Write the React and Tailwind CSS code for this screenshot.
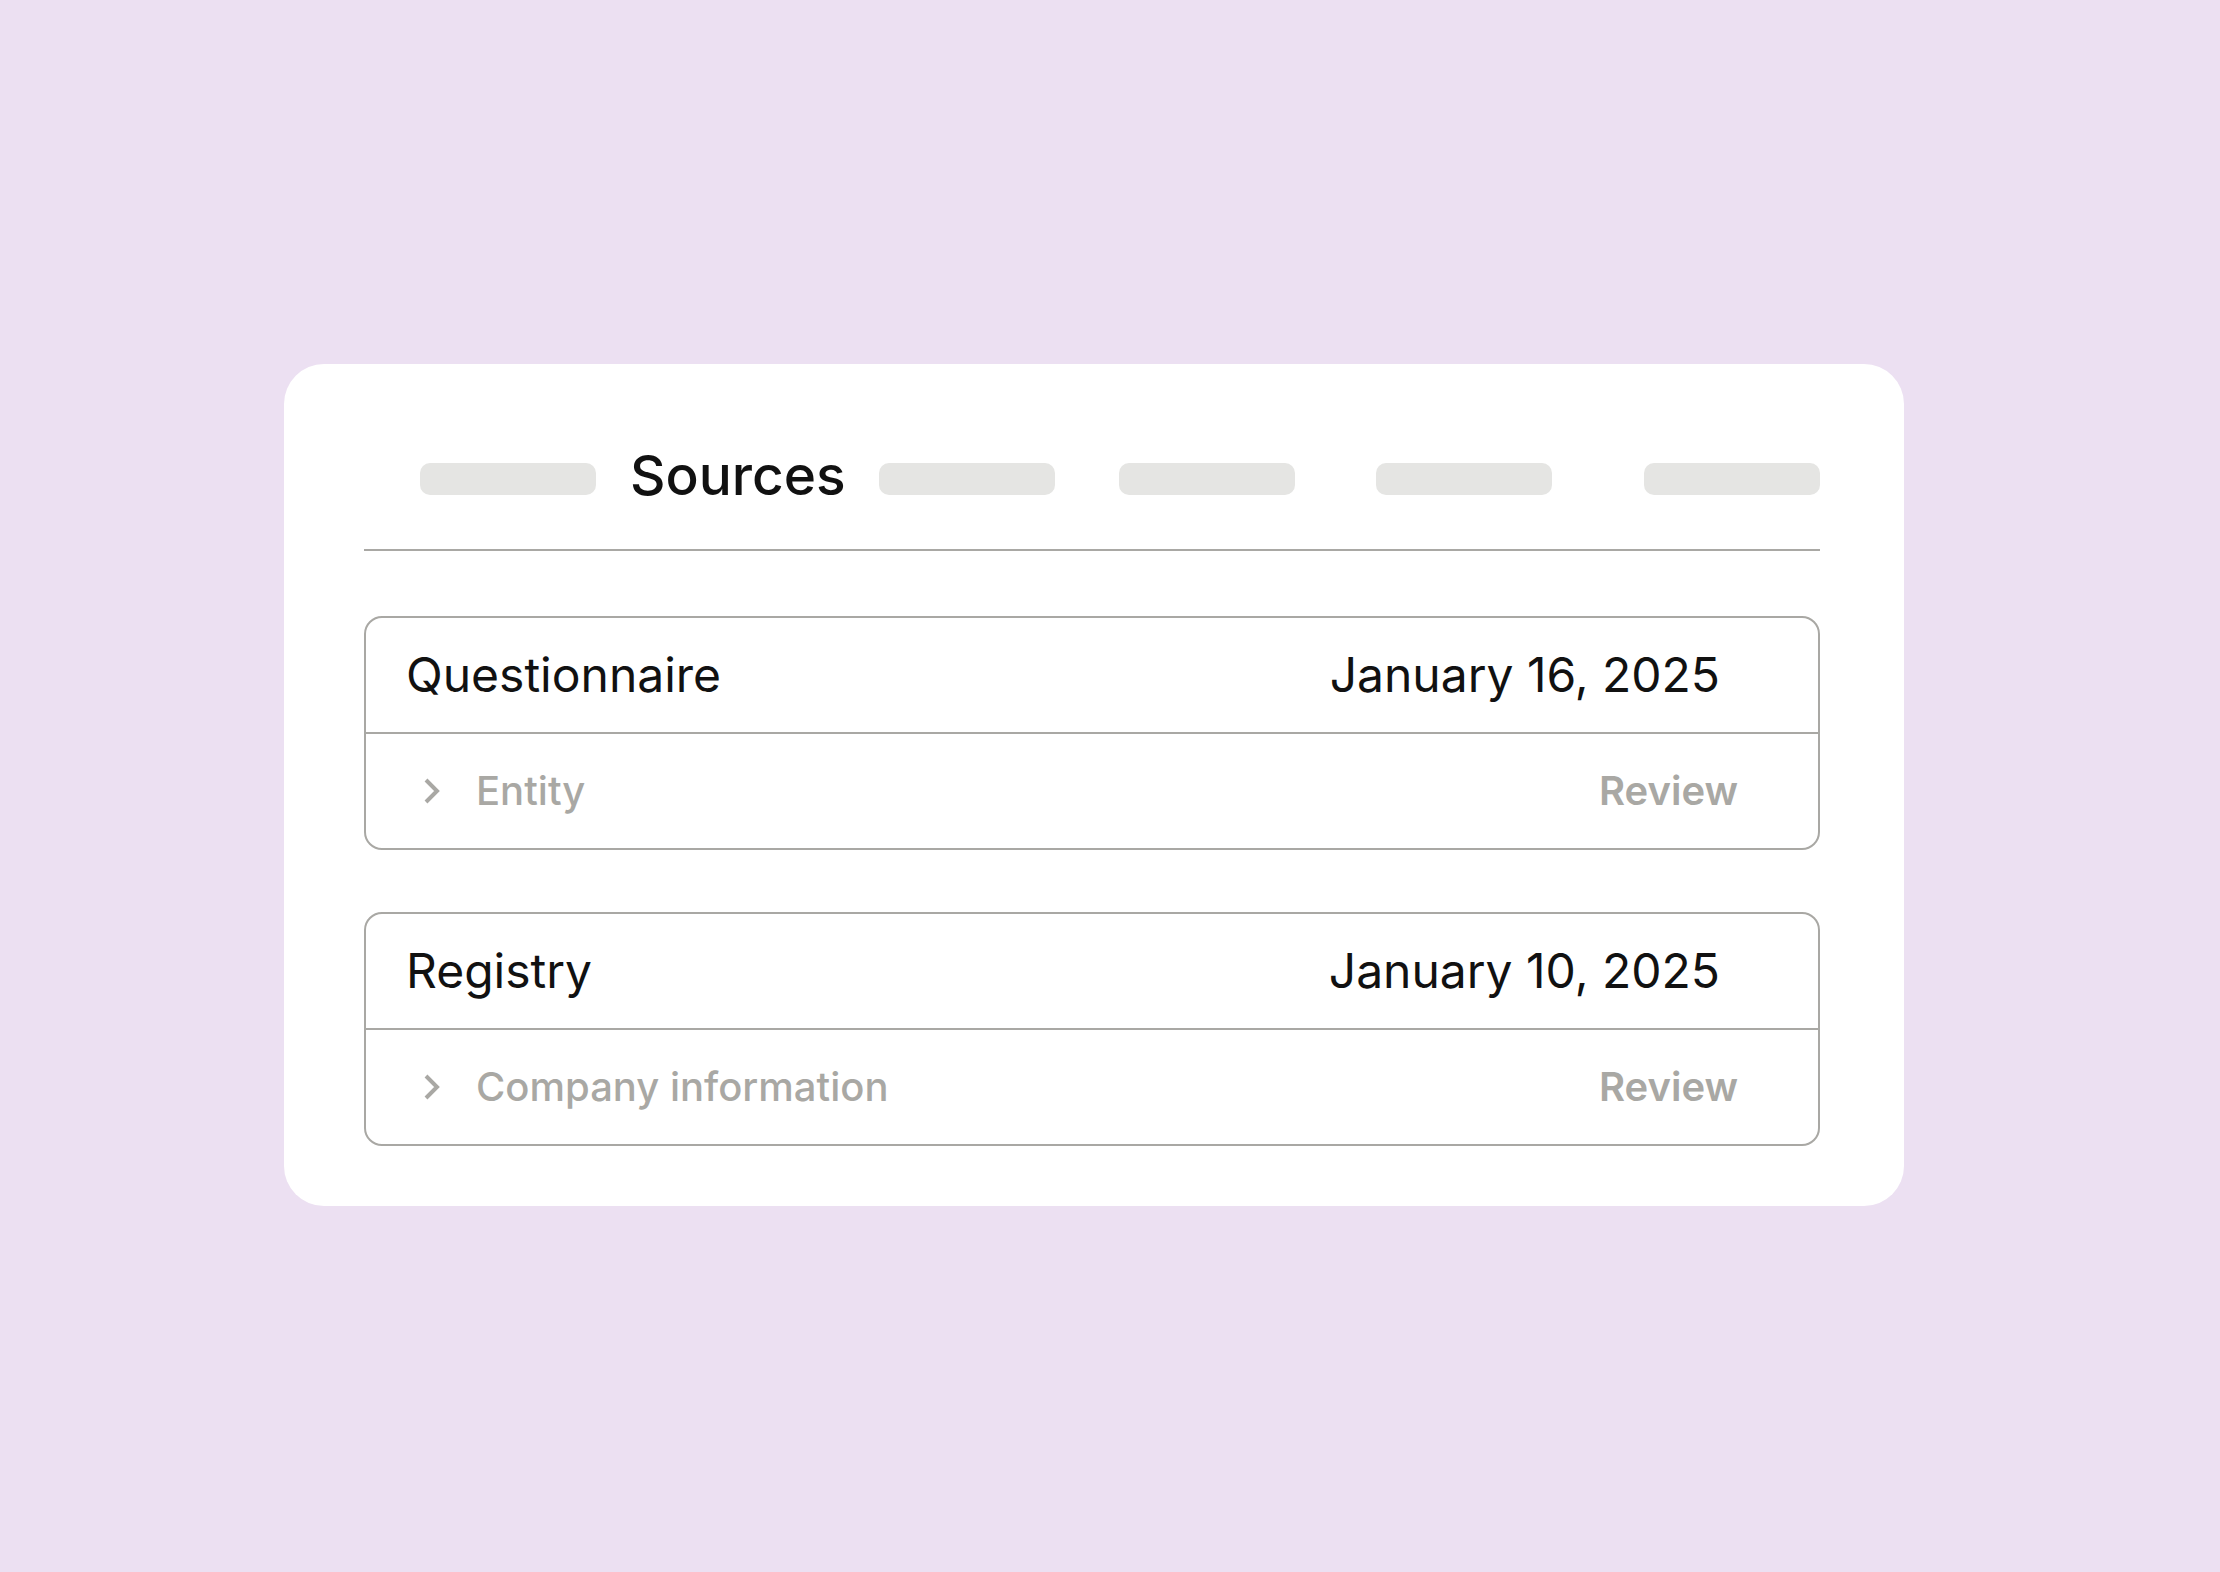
import React from "react";

function Chevron() {
  return (
    <svg width="18" height="28" viewBox="0 0 18 28" fill="none" className="shrink-0">
      <polyline points="3,3 14,14 3,25" stroke="#a9a8a4" strokeWidth="4" strokeLinecap="butt" strokeLinejoin="miter" />
    </svg>
  );
}

function Pill({ className = "" }) {
  return <div className={"h-[32px] w-[176px] shrink-0 rounded-[10px] bg-[#e5e5e3] " + className} />;
}

function SourceBox({ title, date, item, className = "" }) {
  return (
    <div className={"rounded-[18px] border-2 border-[#a9a8a4] " + className}>
      <div className="flex h-[114px] items-center pl-[40px] pr-[98px]">
        <span className="text-[48px] leading-none text-[#111111]">{title}</span>
        <span className="ml-auto text-[48px] leading-none text-[#111111]">{date}</span>
      </div>
      <div className="h-[2px] bg-[#a9a8a4]" />
      <div className="flex h-[114px] items-center pl-[57px] pr-[80px]">
        <Chevron />
        <span className="ml-[35px] text-[40px] font-medium leading-none text-[#a9a8a4]">{item}</span>
        <span className="ml-auto text-[40px] font-semibold leading-none text-[#a9a8a4]">Review</span>
      </div>
    </div>
  );
}

export default function App() {
  return (
    <div
      className="h-[1572px] w-[2220px] overflow-hidden bg-[#ece0f2] pt-[364px]"
      style={{ fontFamily: "Inter, 'Noto Sans', sans-serif" }}
    >
      <div className="ml-[284px] w-[1620px] rounded-[40px] bg-white pb-[60px] pl-[80px] pr-[84px] pt-[84px]">
        <div className="flex items-baseline">
          <Pill className="ml-[56px]" />
          <span className="ml-[34px] text-[55px] font-medium leading-none text-[#111111]">Sources</span>
          <Pill className="ml-[33px]" />
          <Pill className="ml-[64px]" />
          <Pill className="ml-[81px]" />
          <Pill className="ml-auto" />
        </div>
        <div className="mt-[46px] h-[2px] bg-[#a9a8a4]" />
        <SourceBox className="mt-[65px]" title="Questionnaire" date="January 16, 2025" item="Entity" />
        <SourceBox className="mt-[62px]" title="Registry" date="January 10, 2025" item="Company information" />
      </div>
    </div>
  );
}
